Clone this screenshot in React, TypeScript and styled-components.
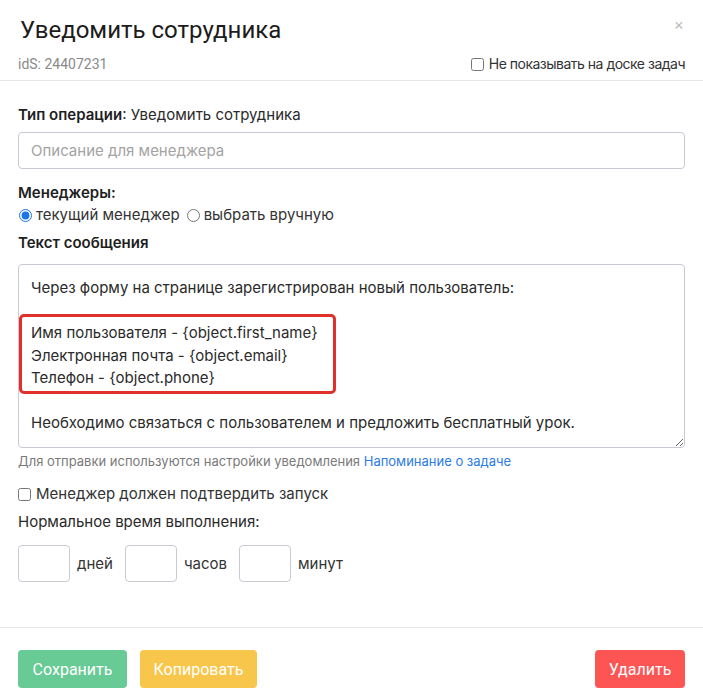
import React from "react";
import styled, { createGlobalStyle } from "styled-components";

const Global = createGlobalStyle`
  html, body { margin: 0; padding: 0; background: #fff; }
  body { font-family: Inter, Roboto, "Noto Sans", sans-serif; color: #222; }
  * { box-sizing: border-box; }
`;

const Modal = styled.div`
  width: 703px;
  height: 699px;
  display: flex;
  flex-direction: column;
  background: #fff;
`;

const Header = styled.div`
  padding: 15px 18px 7px 18px;
  border-bottom: 1px solid #e6e6e6;
`;

const TitleRow = styled.div`
  display: flex;
  justify-content: space-between;
  align-items: flex-start;
`;

const Title = styled.h1`
  margin: 0 0 0 2px;
  font-family: Roboto, sans-serif;
  font-size: 24px;
  line-height: 30px;
  font-weight: 400;
  color: #1c1c1c;
`;

const Close = styled.span`
  font-size: 16px;
  line-height: 14px;
  color: #bdbdbd;
  margin-top: 2px;
  margin-right: 1px;
`;

const SubRow = styled.div`
  display: flex;
  justify-content: space-between;
  align-items: center;
  margin-top: 10px;
  height: 18px;
`;

const Ids = styled.span`
  font-size: 14px;
  font-family: Roboto, sans-serif;
  color: #8a8a8a;
`;

const CheckLabel = styled.label<{ $size?: number; $spacing?: number }>`
  display: flex;
  align-items: center;
  gap: 5px;
  font-size: ${(p) => p.$size ?? 14}px;
  letter-spacing: ${(p) => p.$spacing ?? 0}px;
  color: #333;
  line-height: 22px;
`;

const Check = styled.input`
  width: 13px;
  height: 13px;
  margin: 0;
`;

const Body = styled.div`
  flex: 1;
  padding: 23px 18px 0 18px;
  display: flex;
  flex-direction: column;
`;

const Line = styled.div<{ $mt?: number }>`
  font-size: 15px;
  line-height: 22px;
  margin-top: ${(p) => p.$mt ?? 0}px;
  color: #2a2a2a;
`;

const Strong = styled.span`
  font-weight: 600;
  color: #1e1e1e;
`;

const Input = styled.input`
  margin-top: 6px;
  height: 37px;
  width: 100%;
  border: 1px solid #c9c9d3;
  border-radius: 4px;
  padding: 0 12px;
  font: inherit;
  font-size: 15px;
  outline: none;
  &::placeholder { color: #a3a3a3; }
`;

const RadioRow = styled.div`
  display: flex;
  align-items: center;
  font-size: 15px;
  line-height: 22px;
  color: #333;
`;

const RadioLabel = styled.label`
  display: flex;
  align-items: center;
  gap: 4px;
  margin-right: 6px;
`;

const Radio = styled.input`
  width: 13px;
  height: 13px;
  margin: 0 0 0 1px;
  accent-color: #1a73e8;
`;

const AreaWrap = styled.div`
  position: relative;
  margin-top: 10px;
  height: 184px;
`;

const Area = styled.textarea`
  width: 100%;
  height: 100%;
  border: 1px solid #c9c9d3;
  border-radius: 4px;
  padding: 12px 12px;
  font: inherit;
  font-size: 15px;
  line-height: 22.5px;
  color: #2a2a2a;
  outline: none;
  resize: vertical;
`;

const Highlight = styled.div`
  position: absolute;
  left: 1px;
  top: 50px;
  width: 317px;
  height: 80px;
  border: 3px solid #e0302a;
  border-radius: 5px;
  pointer-events: none;
`;

const Hint = styled.div`
  margin-top: 4px;
  font-size: 13px;
  line-height: 18px;
  color: #7a7a7a;
`;

const Link = styled.a`
  color: #2d7be5;
  text-decoration: none;
`;

const TimeRow = styled.div`
  display: flex;
  align-items: center;
  margin-top: 12px;
`;

const TimeBox = styled.input`
  width: 52px;
  height: 37px;
  border: 1px solid #c9c9d3;
  border-radius: 4px;
  margin: 0;
  outline: none;
`;

const TimeUnit = styled.span`
  font-size: 15px;
  color: #333;
  margin: 0 12px 0 7px;
`;

const Footer = styled.div`
  border-top: 1px solid #e6e6e6;
  padding: 22px 18px 11px 18px;
  display: flex;
  gap: 13px;
`;

const Button = styled.button<{ $bg: string; $w: number }>`
  height: 38px;
  width: ${(p) => p.$w}px;
  border: none;
  border-radius: 4px;
  background: ${(p) => p.$bg};
  color: #fff;
  font-family: Roboto, sans-serif;
  font-size: 16px;
  padding: 0;
  &:last-child { margin-left: auto; }
`;

const message = `Через форму на странице зарегистрирован новый пользователь:

Имя пользователя - {object.first_name}
Электронная почта - {object.email}
Телефон - {object.phone}

Необходимо связаться с пользователем и предложить бесплатный урок.`;

export default function App() {
  return (
    <Modal>
      <Global />
      <Header>
        <TitleRow>
          <Title>Уведомить сотрудника</Title>
          <Close>×</Close>
        </TitleRow>
        <SubRow>
          <Ids>idS: 24407231</Ids>
          <CheckLabel $size={14} $spacing={-0.5}>
            <Check type="checkbox" />
            Не показывать на доске задач
          </CheckLabel>
        </SubRow>
      </Header>
      <Body>
        <Line>
          <Strong>Тип операции</Strong>: Уведомить сотрудника
        </Line>
        <Input placeholder="Описание для менеджера" />
        <Line $mt={13}>
          <Strong>Менеджеры:</Strong>
        </Line>
        <RadioRow>
          <RadioLabel>
            <Radio type="radio" name="m" defaultChecked />
            текущий менеджер
          </RadioLabel>
          <RadioLabel>
            <Radio type="radio" name="m" />
            выбрать вручную
          </RadioLabel>
        </RadioRow>
        <Line $mt={6}>
          <Strong>Текст сообщения</Strong>
        </Line>
        <AreaWrap>
          <Area defaultValue={message} />
          <Highlight />
        </AreaWrap>
        <Hint>
          Для отправки используются настройки уведомления{" "}
          <Link href="#">Напоминание о задаче</Link>
        </Hint>
        <Line $mt={13}>
          <CheckLabel $size={15}>
            <Check type="checkbox" />
            Менеджер должен подтвердить запуск
          </CheckLabel>
        </Line>
        <Line $mt={6}>Нормальное время выполнения:</Line>
        <TimeRow>
          <TimeBox />
          <TimeUnit>дней</TimeUnit>
          <TimeBox />
          <TimeUnit>часов</TimeUnit>
          <TimeBox />
          <TimeUnit>минут</TimeUnit>
        </TimeRow>
      </Body>
      <Footer>
        <Button $bg="#68ca95" $w={109}>Сохранить</Button>
        <Button $bg="#f7c64a" $w={117}>Копировать</Button>
        <Button $bg="#fd5454" $w={90}>Удалить</Button>
      </Footer>
    </Modal>
  );
}
